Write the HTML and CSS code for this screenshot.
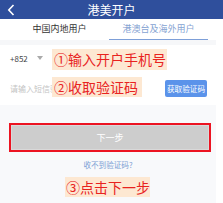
FILE: index.html
```html
<!DOCTYPE html>
<html>
<head>
<meta charset="utf-8">
<link rel="stylesheet" href="styles.css">
</head>
<body>
<div class="page">
  <div class="header">
    <svg class="back" width="8" height="12" viewBox="0 0 8 12"><path d="M6.5 1 L1.8 6 L6.5 11" fill="none" stroke="#fff" stroke-width="1.6"/></svg>
    <span class="title">港美开户</span>
  </div>
  <div class="tabs">
    <div class="tab">中国内地用户</div>
    <div class="tab active">港澳台及海外用户</div>
  </div>
  <div class="band"></div>
  <div class="form">
    <div class="row row-phone">
      <span class="code">+852</span>
      <span class="caret"></span>
    </div>
    <div class="row row-sms">
      <span class="placeholder">请输入短信验证码</span>
      <span class="get-code">获取验证码</span>
    </div>
  </div>
  <div class="bottom">
    <div class="next-wrap"><div class="next">下一步</div></div>
    <div class="noreceive">收不到验证码?</div>
  </div>
  <div class="note note1">①输入开户手机号</div>
  <div class="note note2">②收取验证码</div>
  <div class="note note3">③点击下一步</div>
</div>
</body>
</html>
```
FILE: styles.css
```css
* { box-sizing: border-box; }
html, body { margin: 0; padding: 0; background: #fff; }
body { font-family: "Noto Sans CJK SC", "Noto Sans", sans-serif; }
.page { position: relative; width: 223px; height: 203px; overflow: hidden; background: #fff; }
.header { height: 19px; background: #2f4f9c; display: flex; align-items: center; justify-content: center; position: relative; }
.back { position: absolute; left: 7px; top: 4px; }
.title { color: #fff; font-size: 12px; line-height: 19px; }
.tabs { height: 21px; display: flex; padding: 0 15px 0 10px; }
.tab { flex: 1; text-align: center; font-size: 9px; line-height: 19px; color: #333; border-bottom: 1px solid transparent; }
.tab.active { color: #86a3d2; border-bottom-color: #7d9fd8; }
.band { height: 5px; width: 216px; background: #f6f7f9; }
.form { width: 216px; }
.row { display: flex; align-items: center; padding-left: 10px; }
.row-phone { height: 26px; }
.code { font-size: 8px; color: #444; }
.caret { width: 0; height: 0; border-left: 3px solid transparent; border-right: 3px solid transparent; border-top: 4px solid #aaa; margin-left: 9px; }
.row-sms { height: 34px; justify-content: space-between; padding-right: 9px; }
.placeholder { font-size: 8px; color: #c4c4c4; }
.get-code { background: #5b93ea; color: #fff; font-size: 7.6px; line-height: 17px; padding: 0 2px; border-radius: 2px; }
.bottom { width: 216px; height: 98px; background: #f8f9fb; padding-top: 18px; }
.next-wrap { margin-left: 9px; width: 202px; height: 29px; border: 2px solid #ec1422; }
.next { height: 100%; background: #cdcdcd; border: 1px solid #d9d9d9; color: #fff; font-size: 9px; display: flex; align-items: center; justify-content: center; }
.noreceive { text-align: center; font-size: 7.6px; color: #7da0d4; margin-top: 8px; padding-left: 0; line-height: 10px; }
.note { position: absolute; background: #fde8d2; color: #e8231f; font-size: 14px; line-height: 20px; height: 21px; padding: 0 1px; white-space: nowrap; }
.note1 { left: 52px; top: 49px; width: 115px; padding-left: 2px; }
.note2 { left: 52px; top: 77px; width: 90px; padding-left: 2px; height: 20px; }
.note3 { left: 65px; top: 177px; width: 85px; height: 20px; }
```
